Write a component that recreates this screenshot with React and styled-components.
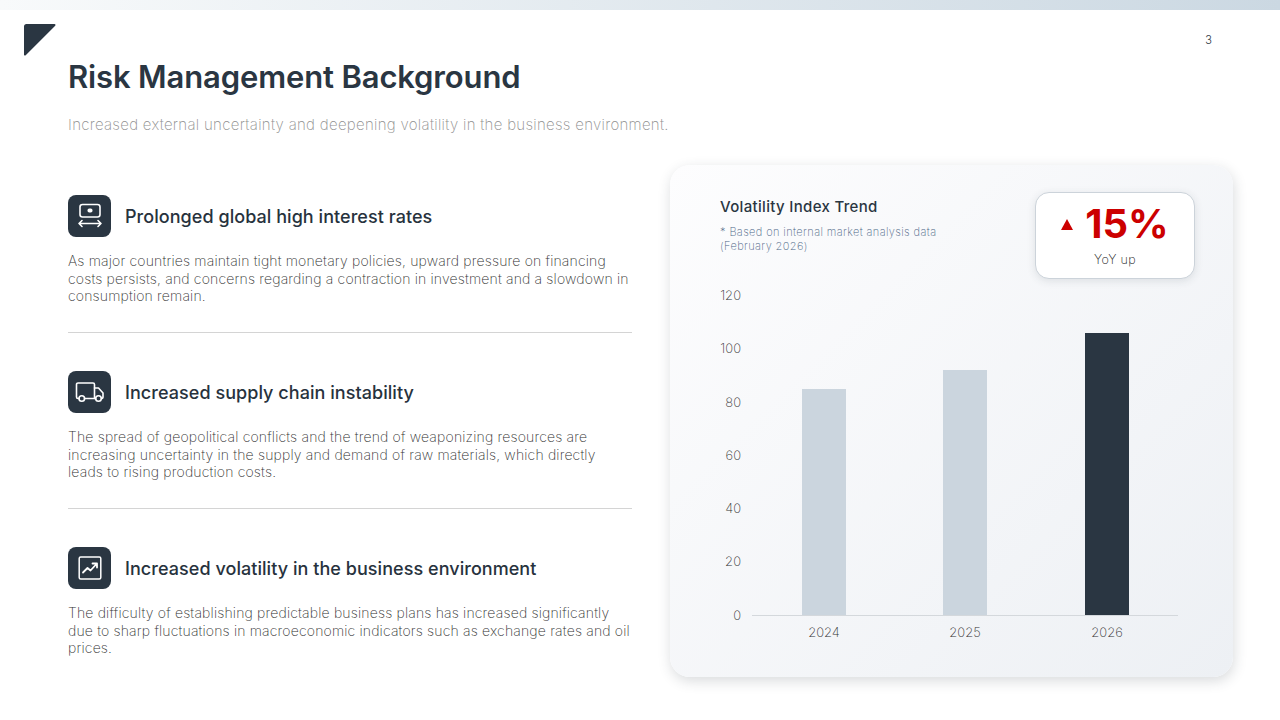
import React from 'react'
import styled, { createGlobalStyle } from 'styled-components'

const GlobalStyle = createGlobalStyle`
  html, body {
    margin: 0;
    padding: 0;
    background: #fff;
  }
  * {
    box-sizing: border-box;
  }
`

const Slide = styled.div`
  position: relative;
  width: 1280px;
  height: 720px;
  overflow: hidden;
  background: #fff;
  font-family: Inter, "Liberation Sans", sans-serif;
  color: #2a3642;
`

const TopBar = styled.div`
  height: 10px;
  background: linear-gradient(90deg, #f8fafb 0%, #cbd8e2 100%);
`

const Corner = styled.svg`
  position: absolute;
  left: 24px;
  top: 24px;
  width: 32px;
  height: 32px;
`

const PageNumber = styled.div`
  position: absolute;
  top: 34px;
  right: 68px;
  font-size: 11px;
  line-height: 13px;
  font-weight: 300;
  color: #2a3642;
`

const Content = styled.div`
  padding: 46px 47px 0 68px;
`

const Title = styled.h1`
  margin: 0;
  font-size: 31px;
  line-height: 42px;
  font-weight: 600;
  letter-spacing: -0.14px;
  color: #2a3642;
`

const Subtitle = styled.p`
  margin: 17px 0 0;
  font-size: 15px;
  line-height: 20px;
  font-weight: 200;
  letter-spacing: 0.3px;
  color: #8f8f8f;
`

const Columns = styled.div`
  display: flex;
  gap: 38px;
  margin-top: 30px;
`

const Left = styled.div`
  width: 564px;
  padding-top: 30px;
`

const Item = styled.section`
  height: 176px;
`

const ItemHead = styled.div`
  display: flex;
  align-items: center;
  gap: 14px;
`

const IconBox = styled.div`
  width: 43px;
  height: 42px;
  border-radius: 8px;
  background: #2a3642;
  display: flex;
  align-items: center;
  justify-content: center;
  svg {
    display: block;
  }
`

const ItemTitle = styled.h2`
  margin: 0;
  padding-top: 2px;
  font-size: 18px;
  line-height: 24px;
  font-weight: 500;
  letter-spacing: 0.05px;
  color: #27323d;
`

const ItemText = styled.p`
  margin: 15px 0 0;
  font-size: 14px;
  line-height: 17.5px;
  font-weight: 200;
  letter-spacing: 0.17px;
  color: #333;
`

const Divider = styled.hr`
  margin: 27px 0 0;
  border: 0;
  height: 1px;
  background: #d4d4d4;
`

const Card = styled.div`
  position: relative;
  width: 563px;
  height: 512px;
  padding: 32px 50px 0;
  border-radius: 20px;
  background: linear-gradient(135deg, #fdfdfe 0%, #edf0f4 100%);
  box-shadow: 1px 4px 13px rgba(42, 54, 66, 0.18);
`

const CardTitle = styled.h3`
  margin: 0;
  font-size: 15px;
  line-height: 20px;
  font-weight: 500;
  letter-spacing: 0.33px;
  color: #2a3642;
`

const CardNote = styled.p`
  margin: 8px 0 0;
  width: 240px;
  font-size: 11px;
  line-height: 14px;
  font-weight: 200;
  letter-spacing: 0.39px;
  color: #4a6585;
`

const Badge = styled.div`
  position: absolute;
  top: 27px;
  right: 38px;
  width: 160px;
  height: 87px;
  border-radius: 14px;
  border: 1px solid #ccd3da;
  background: #fff;
  box-shadow: 0 2px 8px rgba(42, 54, 66, 0.12);
  display: flex;
  flex-direction: column;
  align-items: center;
  padding-top: 7px;
`

const BadgeValue = styled.div`
  display: flex;
  align-items: center;
  gap: 12px;
  font-size: 40px;
  line-height: 48px;
  font-weight: 700;
  color: #cc0000;
`

const UpMark = styled.span`
  width: 0;
  height: 0;
  border-left: 6.5px solid transparent;
  border-right: 6.5px solid transparent;
  border-bottom: 11px solid #cc0000;
`

const BadgeLabel = styled.div`
  margin-top: 4px;
  font-size: 12.5px;
  line-height: 16px;
  font-weight: 200;
  letter-spacing: 0.35px;
  color: #111;
`

const Chart = styled.svg`
  position: absolute;
  left: 0;
  top: 105px;
  width: 563px;
  height: 400px;
  font-family: Inter, "Liberation Sans", sans-serif;
  font-size: 13px;
  font-weight: 200;
  fill: #333;
`

const items = [
  {
    title: 'Prolonged global high interest rates',
    text: 'As major countries maintain tight monetary policies, upward pressure on financing costs persists, and concerns regarding a contraction in investment and a slowdown in consumption remain.',
    icon: (
      <svg width="26" height="26" viewBox="0 0 26 26" fill="none" stroke="#fff" strokeWidth="1.6" strokeLinecap="round" strokeLinejoin="round">
        <rect x="3" y="1.500" width="20" height="12.500" rx="2.500" />
        <rect x="10.500" y="5.500" width="5" height="4" rx="1.800" fill="#fff" stroke="none" />
        <path d="M2 20.500h22M5 17.500l-3 3 3 3M21 17.500l3 3-3 3" />
      </svg>
    ),
  },
  {
    title: 'Increased supply chain instability',
    text: 'The spread of geopolitical conflicts and the trend of weaponizing resources are increasing uncertainty in the supply and demand of raw materials, which directly leads to rising production costs.',
    icon: (
      <svg width="30" height="24" viewBox="0 0 30 24" fill="none" stroke="#fff" strokeWidth="1.6" strokeLinecap="round" strokeLinejoin="round">
        <path d="M4 18.500H3a1.500 1.500 0 0 1-1.500-1.500V4.500A1.500 1.500 0 0 1 3 3h15A1.500 1.500 0 0 1 19.500 4.500V18.500H9.500" />
        <path d="M19.500 8h4l4.500 5v4a1.500 1.500 0 0 1-1.500 1.500H26.500" />
        <path d="M19.500 18.500h1" />
        <circle cx="6.800" cy="18.500" r="2.800" />
        <circle cx="23.500" cy="18.500" r="2.800" />
      </svg>
    ),
  },
  {
    title: 'Increased volatility in the business environment',
    text: 'The difficulty of establishing predictable business plans has increased significantly due to sharp fluctuations in macroeconomic indicators such as exchange rates and oil prices.',
    icon: (
      <svg width="26" height="26" viewBox="0 0 26 26" fill="none" stroke="#fff" strokeLinecap="round" strokeLinejoin="round">
        <rect x="2.200" y="2" width="21.600" height="22" rx="1.500" strokeWidth="1.500" />
        <path d="M6 17.500l4.500-4.500 3 2.500 6-6.500M15.500 8.500h4.500v4" strokeWidth="1.800" />
      </svg>
    ),
  },
]

const ticks = [0, 20, 40, 60, 80, 100, 120]
const bars = [
  { year: '2024', value: 85, x: 132, color: '#cbd5de' },
  { year: '2025', value: 92, x: 273, color: '#cbd5de' },
  { year: '2026', value: 106, x: 415, color: '#2a3642' },
]
const baseY = 345
const unit = 2.662

const App = () => {
  return (
    <Slide>
      <GlobalStyle />
      <TopBar />
      <Corner viewBox="0 0 32 32">
        <path d="M2.500 0H30.500a1 1 0 0 1 .7 1.700L1.700 31.300A1 1 0 0 1 0 30.500V2.500A2.500 2.500 0 0 1 2.500 0z" fill="#2a3642" />
      </Corner>
      <PageNumber>3</PageNumber>
      <Content>
        <Title>Risk Management Background</Title>
        <Subtitle>Increased external uncertainty and deepening volatility in the business environment.</Subtitle>
        <Columns>
          <Left>
            {items.map((item, i) => (
              <Item key={item.title}>
                <ItemHead>
                  <IconBox>{item.icon}</IconBox>
                  <ItemTitle>{item.title}</ItemTitle>
                </ItemHead>
                <ItemText>{item.text}</ItemText>
                {i < items.length - 1 && <Divider />}
              </Item>
            ))}
          </Left>
          <Card>
            <CardTitle>Volatility Index Trend</CardTitle>
            <CardNote>* Based on internal market analysis data (February 2026)</CardNote>
            <Badge>
              <BadgeValue>
                <UpMark />
                15%
              </BadgeValue>
              <BadgeLabel>YoY up</BadgeLabel>
            </Badge>
            <Chart viewBox="0 0 563 400">
              {ticks.map((t) => (
                <text key={t} x="71" y={baseY - t * unit + 4.600} textAnchor="end">{t}</text>
              ))}
              <line x1="82" x2="508" y1={baseY + 0.500} y2={baseY + 0.500} stroke="#d4d8dc" />
              {bars.map((b) => (
                <g key={b.year}>
                  <rect x={b.x} y={Math.round(baseY - b.value * unit)} width="44" height={Math.round(b.value * unit)} fill={b.color} />
                  <text x={b.x + 22} y={baseY + 22} textAnchor="middle">{b.year}</text>
                </g>
              ))}
            </Chart>
          </Card>
        </Columns>
      </Content>
    </Slide>
  )
}

export default App
